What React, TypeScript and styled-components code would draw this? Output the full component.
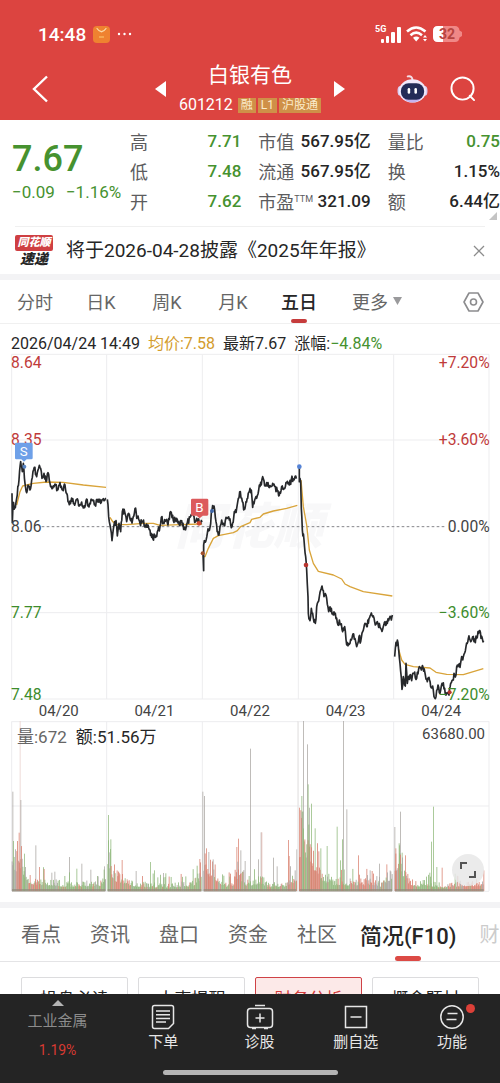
import React from "react";
import styled, { createGlobalStyle } from "styled-components";

const GREEN = "#46922f";
const RED = "#dc4440";

const GlobalStyle = createGlobalStyle`
  * { box-sizing: border-box; }
  body {
    margin: 0;
    background: #fff;
    color: #262626;
    font-family: Roboto, "Noto Sans CJK SC", sans-serif;
  }
  button {
    border: 0;
    padding: 0;
    background: none;
    color: inherit;
    font: inherit;
    white-space: nowrap;
    cursor: pointer;
  }
  svg { display: block; }
`;

const Page = styled.div`
  display: flex;
  flex-direction: column;
  height: 100vh;
`;

const Header = styled.header`
  flex: none;
  background: ${RED};
  color: #fff;
  height: 120px;
`;

const StatusBar = styled.div`
  display: flex;
  align-items: center;
  height: 58px;
  padding: 10px 38px 0;
`;

const Clock = styled.span`
  font-size: 19px;
  font-weight: 500;
  margin-right: 7px;
`;

const StatusIcons = styled.div`
  display: flex;
  align-items: center;
  gap: 5px;
  margin-left: auto;
`;

const TitleBar = styled.div`
  display: grid;
  grid-template-columns: 1fr auto 1fr;
  align-items: center;
  height: 62px;
`;

const HeaderActions = styled.div<{ $end?: boolean }>`
  display: flex;
  align-items: center;
  gap: 22px;
  padding: ${(p) => (p.$end ? "0 24px 0 0" : "0 0 0 32px")};
  justify-content: ${(p) => (p.$end ? "flex-end" : "flex-start")};
`;

const StockSwitch = styled.div`
  display: flex;
  align-items: center;
  gap: 13px;
`;

const StockTitle = styled.div`
  display: flex;
  flex-direction: column;
  align-items: center;
`;

const StockName = styled.h1`
  margin: 0;
  font-size: 21px;
  line-height: 32px;
  font-weight: 400;
`;

const StockMeta = styled.div`
  display: flex;
  align-items: center;
  gap: 2px;
  font-size: 16px;
  line-height: 28px;
`;

const StockCode = styled.span`
  margin-right: 3px;
`;

const Tag = styled.span`
  padding: 0 3px;
  background: #cf9048;
  color: #fbeccb;
  font-size: 12px;
  line-height: 15px;
`;

const Content = styled.main`
  flex: 1;
  min-height: 0;
  overflow-y: auto;
  scrollbar-width: none;
`;

const Quote = styled.section`
  position: relative;
  display: grid;
  grid-template-columns: 118px 1fr;
  height: 106px;
  padding: 6px 0 0 12px;
`;

const LastPrice = styled.div`
  color: ${GREEN};
  white-space: nowrap;
`;

const Price = styled.div`
  padding-top: 14px;
  font-size: 36px;
  line-height: 38px;
  font-weight: 500;
`;

const Change = styled.div`
  display: flex;
  gap: 11px;
  font-size: 17px;
  line-height: 28px;
`;

const StatGroups = styled.div`
  display: grid;
  grid-template-columns: 111fr 112fr 112fr;
  column-gap: 17px;
`;

const Stats = styled.dl`
  margin: 0;
`;

const Stat = styled.div`
  display: flex;
  justify-content: space-between;
  align-items: center;
  height: 30px;
  white-space: nowrap;
`;

const StatLabel = styled.dt`
  color: #5c5c5e;
  font-size: 18px;
  sup {
    font-size: 9px;
    line-height: 0;
  }
`;

const StatValue = styled.dd<{ $down?: boolean }>`
  margin: 0;
  font-size: 17px;
  line-height: 26px;
  font-weight: 500;
  color: ${(p) => (p.$down ? GREEN : "#262626")};
`;

const Corner = styled.svg`
  position: absolute;
  right: 3px;
  bottom: 6px;
`;

const News = styled.section`
  display: flex;
  align-items: center;
  gap: 13px;
  height: 48px;
  margin: 0 15px;
  border-top: 1px solid #f0f0f0;
`;

const NewsBadge = styled.div`
  display: flex;
  flex-direction: column;
  align-items: center;
  width: 38px;
  font-style: italic;
  font-weight: 900;
  font-size: 14px;
  line-height: 16px;
  white-space: nowrap;
`;

const NewsBrand = styled.span`
  align-self: stretch;
  border-radius: 2px;
  background: #cf3f42;
  color: #fff;
  font-size: 11px;
  line-height: 16px;
  text-align: center;
`;

const NewsLink = styled.a`
  flex: 1;
  color: #262626;
  font-size: 19px;
  line-height: 24px;
  text-decoration: none;
  white-space: nowrap;
`;

const Band = styled.div`
  height: 6px;
  background: #f3f3f5;
`;

const PeriodTabs = styled.nav`
  display: grid;
  grid-template-columns: repeat(5, 66fr) 90fr 78fr;
  height: 44px;
  padding-left: 2px;
  border-bottom: 1px solid #f0f0f0;
`;

const PeriodTab = styled.button<{ $active?: boolean }>`
  position: relative;
  display: flex;
  align-items: center;
  justify-content: center;
  gap: 5px;
  padding-bottom: 2px;
  font-size: 18px;
  color: ${(p) => (p.$active ? "#262626" : "#666")};
  font-weight: ${(p) => (p.$active ? 500 : 400)};
  &::after {
    content: "";
    display: ${(p) => (p.$active ? "block" : "none")};
    position: absolute;
    bottom: 0;
    width: 16px;
    height: 4px;
    border-radius: 2px;
    background: #c63c3c;
  }
`;

const SettingsButton = styled.button`
  justify-self: end;
  margin-right: 16px;
`;

const Readout = styled.div`
  display: flex;
  gap: 8px;
  padding: 10px 11px 0;
  font-size: 16px;
  line-height: 20px;
  white-space: nowrap;
`;

const Toned = styled.span<{ $color: string }>`
  color: ${(p) => p.$color};
`;

const Plot = styled.svg`
  width: 100%;
  height: auto;
  overflow: visible;
`;

const Dates = styled.div`
  display: grid;
  grid-template-columns: repeat(5, 1fr);
  padding: 1px 11px 0;
  color: #444;
  font-size: 15px;
  line-height: 20px;
  text-align: center;
`;

const VolumePanel = styled.section`
  position: relative;
  padding-bottom: 9px;
`;

const VolumeLegend = styled.div`
  position: absolute;
  inset: 4px 15px auto 17px;
  display: flex;
  gap: 9px;
  font-size: 17px;
  line-height: 24px;
`;

const VolumeMax = styled.span`
  margin-left: auto;
  color: #444;
  font-size: 15px;
  line-height: 18px;
`;

const ExpandButton = styled.button`
  position: absolute;
  right: 16px;
  bottom: 16px;
  width: 32px;
  height: 32px;
  border-radius: 50%;
  background: rgba(232, 232, 232, 0.85);
  display: grid;
  place-items: center;
`;

const SectionTabs = styled.nav`
  display: flex;
  align-items: stretch;
  gap: 29px;
  height: 54px;
  padding-left: 21px;
  overflow: hidden;
  border-bottom: 1px solid #e4e4e6;
`;

const SectionTab = styled.button<{ $active?: boolean; $faded?: boolean }>`
  position: relative;
  flex: none;
  padding-bottom: 2px;
  font-size: ${(p) => (p.$active ? 22 : 20)}px;
  font-weight: ${(p) => (p.$active ? 500 : 400)};
  color: ${(p) => (p.$active ? "#262626" : p.$faded ? "#ccc" : "#666")};
  margin: ${(p) => (p.$active ? "0 -6px" : "0")};
  &::after {
    content: "";
    display: ${(p) => (p.$active ? "block" : "none")};
    position: absolute;
    left: 50%;
    bottom: 0;
    width: 26px;
    height: 5px;
    margin-left: -13px;
    border-radius: 3px;
    background: #dc4a45;
  }
`;

const Topics = styled.div`
  display: grid;
  grid-template-columns: repeat(4, 1fr);
  gap: 10px;
  padding: 15px 21px;
`;

const Topic = styled.button<{ $active?: boolean }>`
  height: 40px;
  border: 1px solid ${(p) => (p.$active ? "#cf4246" : "#dcdcde")};
  border-radius: 2px;
  background: ${(p) => (p.$active ? "#fce9e8" : "#fff")};
  color: ${(p) => (p.$active ? "#d23b3b" : "#262626")};
  font-size: 17px;
`;

const BottomBar = styled.footer`
  flex: none;
  height: 89px;
  background: #242424;
  color: #e6e6e6;
`;

const BottomNav = styled.nav`
  display: grid;
  grid-template-columns: 115fr repeat(4, 96fr);
  height: 76px;
`;

const BottomItem = styled.button`
  display: flex;
  flex-direction: column;
  align-items: center;
  padding-top: 9px;
  font-size: 15px;
  line-height: 22px;
`;

const SectorItem = styled(BottomItem)`
  gap: 2px;
  padding-top: 6px;
  color: #8c8c8c;
  line-height: 27px;
`;

const SectorChange = styled.span`
  color: #d83a32;
  font-size: 14px;
`;

const IconHolder = styled.span`
  position: relative;
  margin-bottom: 1px;
`;

const Dot = styled.span`
  position: absolute;
  top: 1px;
  right: -9px;
  width: 9px;
  height: 9px;
  border-radius: 50%;
  background: #dc4038;
`;

const HomeIndicator = styled.div`
  width: 35%;
  height: 5px;
  margin: 0 auto;
  border-radius: 3px;
  background: #b4b4b4;
`;

/* ---------- chart data ---------- */

type Pt = [number, number];

const toPts = (s: string): Pt[] => s.split(" ").map((p) => p.split(",").map(Number) as Pt);

const PRICE = [
  "36,190 37,278 39,225 44,232 50,205 57,150 62,95 67,125 70,100 75,160 80,188 84,165 90,180 95,150 103,112 110,140 114,120 120,112 126,145 132,130 138,155 144,128 150,160 158,175 165,162 172,180 180,158 188,180 195,165 200,190 208,224 215,204 222,220 230,208 238,228 245,216 250,234 258,212 265,225 275,208 285,225 295,208 302,220 310,206 318,205",
  "322,208 326,260 330,285 336,332 342,285 348,272 352,318 357,280 362,305 367,245 374,245 380,275 386,250 392,272 398,268 405,236 412,262 420,280 427,275 436,285 444,285 450,300 455,322 466,322 474,300 480,290 484,262 490,280 500,268 504,285 512,245 520,272 530,265 538,285 545,272 553,298 562,278 570,262 580,256 586,276 592,268 600,278 606,276",
  "609,370 611,422 611,345 617,335 622,310 630,292 636,240 642,228 648,275 655,315 660,290 665,270 672,285 680,265 688,270 696,290 703,245 710,235 715,205 721,185 727,215 731,240 738,215 743,205 748,185 754,180 758,232 764,210 770,205 778,165 784,165 788,140 796,168 804,158 812,170 820,165 826,170 836,198 845,170 852,175 860,158 868,165 874,148 882,150 889,146",
  "898,110 898,155 902,155 904,235 907,300 912,330 917,380 920,420 924,500 925,550 930,572 934,535 940,565 946,580 952,520 958,500 966,468 972,500 978,495 986,545 994,535 1000,555 1006,550 1014,585 1018,570 1028,605 1034,590 1040,645 1050,640 1054,630 1061,612 1070,650 1077,620 1082,635 1088,605 1095,580 1100,590 1107,565 1112,555 1120,558 1126,585 1132,575 1140,590 1148,598 1155,575 1162,580 1168,565 1174,570 1177,555",
  "1184,680 1186,655 1192,630 1196,660 1200,700 1206,778 1210,740 1216,768 1218,700 1222,760 1230,735 1235,752 1240,730 1250,745 1258,710 1264,720 1269,712 1276,735 1282,755 1287,742 1292,770 1298,768 1302,800 1308,800 1314,765 1320,790 1326,760 1334,775 1338,795 1347,795 1352,760 1360,750 1362,730 1368,735 1372,705 1380,712 1385,680 1390,680 1398,650 1405,625 1412,635 1418,620 1422,635 1430,625 1438,602 1443,625 1451,632",
].map(toPts);

const AVERAGE = [
  "50,225 60,185 68,168 100,160 140,156 190,157 250,165 318,172",
  "330,262 338,275 350,283 380,284 430,280 460,280 480,286 540,284 606,282",
  "608,380 615,380 625,355 640,325 655,317 700,308 712,302 722,290 750,278 755,268 780,262 790,252 820,243 860,235 892,226",
  "903,150 910,230 920,285 928,360 940,400 955,424 1000,435 1025,447 1035,462 1050,470 1090,485 1177,498",
  "1196,658 1205,690 1215,703 1240,710 1290,714 1308,727 1340,733 1390,734 1420,725 1450,716",
];

const makeRandom = (seed: number) => () => {
  seed = (seed * 16807) % 2147483647;
  return seed / 2147483647;
};

/* Fills the gaps between traded points with small tick movements. */
const withTicks = (pts: Pt[], seed: number) => {
  const rnd = makeRandom(seed);
  const out: string[] = [];
  pts.forEach(([x, y], i) => {
    out.push(`${x},${y}`);
    const next = pts[i + 1];
    if (!next) return;
    const steps = Math.round((next[0] - x) / 2);
    for (let s = 1; s < steps; s++) {
      const nx = x + ((next[0] - x) * s) / steps;
      const ny = y + ((next[1] - y) * s) / steps + (rnd() - 0.5) * 20;
      out.push(`${nx.toFixed(1)},${ny.toFixed(1)}`);
    }
  });
  return out.join(" ");
};

const UP = "#d9806f";
const DOWN = "#8fb87a";
const FLAT = "#a9a5a2";

const ENVELOPE = [
  "36,220 42,110 55,190 62,150 75,90 85,50 120,45 200,30 300,35 316,85",
  "323,200 335,110 345,70 370,55 400,32 450,26 520,26 580,36 604,90",
  "611,150 625,110 640,105 655,50 680,30 700,36 715,110 722,80 740,34 784,55 800,28 850,28 870,45 889,75",
  "898,250 905,250 915,250 930,220 945,140 965,70 990,45 1040,40 1100,40 1140,30 1176,80",
  "1185,150 1195,150 1205,120 1215,60 1240,34 1300,32 1330,24 1400,36 1451,36",
].map(toPts);

const TREND = [
  [[50, FLAT], [66, UP], [84, DOWN], [120, UP], [318, DOWN]],
  [[338, DOWN], [372, UP], [606, DOWN]],
  [[614, FLAT], [662, UP], [690, DOWN], [726, UP], [860, DOWN], [890, UP]],
  [[902, UP], [932, DOWN], [966, UP], [1050, DOWN], [1120, UP], [1177, FLAT]],
  [[1196, UP], [1216, DOWN], [1250, UP], [1340, DOWN], [1452, UP]],
] as [number, string][][];

const SPIKES: [number, number, string][] = [
  [38, 298, FLAT], [40, 150, DOWN], [60, 510, "#e9cfcb"], [62, 273, FLAT], [57, 175, UP], [73, 112, DOWN], [107, 137, FLAT], [118, 72, UP],
  [155, 55, FLAT], [164, 58, FLAT], [208, 102, FLAT], [230, 67, DOWN], [245, 82, FLAT], [272, 64, FLAT], [313, 74, FLAT],
  [325, 228, DOWN], [332, 155, DOWN], [366, 93, UP], [408, 60, FLAT], [451, 87, DOWN], [463, 62, DOWN], [490, 54, FLAT], [599, 96, UP],
  [608, 298, FLAT], [613, 285, FLAT], [619, 128, UP], [626, 117, FLAT], [710, 132, UP], [715, 157, UP], [722, 122, FLAT], [735, 90, FLAT],
  [751, 427, FLAT], [775, 95, FLAT], [783, 176, FLAT], [785, 176, "#e5b5ad"], [820, 100, FLAT], [831, 74, FLAT], [865, 153, UP], [867, 105, UP], [890, 125, FLAT], [893, 510, "#e4e2e2"],
  [898, 250, UP], [905, 285, DOWN], [910, 510, FLAT], [922, 440, FLAT], [924, 320, DOWN], [928, 250, FLAT], [934, 262, DOWN], [945, 188, DOWN],
  [962, 128, DOWN], [981, 135, DOWN], [1011, 193, DOWN], [1021, 92, DOWN], [1027, 155, DOWN], [1030, 510, FLAT], [1040, 245, FLAT], [1075, 107, UP], [1110, 62, FLAT], [1138, 82, FLAT], [1160, 80, UP],
  [1184, 192, FLAT], [1187, 128, UP], [1198, 137, DOWN], [1201, 238, FLAT], [1206, 115, DOWN], [1216, 107, UP], [1294, 148, DOWN], [1300, 253, DOWN], [1310, 72, DOWN], [1326, 70, UP],
];

const levelAt = (pts: Pt[], x: number) => {
  for (let i = 1; i < pts.length; i++) {
    const [x0, y0] = pts[i - 1];
    const [x1, y1] = pts[i];
    if (x <= x1) return y0 + ((y1 - y0) * (x - x0)) / (x1 - x0);
  }
  return pts[pts.length - 1][1];
};

const VOLUME = ENVELOPE.flatMap((pts, day) => {
  const rnd = makeRandom(9173 + day * 577);
  const bars: [number, number, string][] = [];
  for (let x = pts[0][0]; x <= pts[pts.length - 1][0]; x += 2) {
    const max = levelAt(pts, x);
    const r = rnd();
    const main = TREND[day].find(([end]) => x <= end)?.[1] ?? FLAT;
    const pick = rnd();
    const color = pick < 0.6 ? main : pick < 0.75 ? UP : pick < 0.88 ? DOWN : FLAT;
    const burst = rnd() > 0.9 ? 30 : 0;
    bars.push([x, max * (0.4 + 0.6 * r * r) + burst, color]);
  }
  return bars;
});

const GRID_X = [35, 320, 607, 895, 1181, 1467];

/* ---------- charts ---------- */

const AXIS = [
  { y: -185, left: "8.64", right: "+7.20%", color: "#bf3b3b" },
  { y: 46, left: "8.35", right: "+3.60%", color: "#bf3b3b" },
  { y: 306, left: "8.06", right: "0.00%", color: "#444" },
  { y: 564, left: "7.77", right: "−3.60%", color: "#3d8c2c" },
  { y: 809, left: "7.48", right: "−7.20%", color: "#3d8c2c" },
];

function PriceChart() {
  return (
    <Plot viewBox="0 -228 1500 1038" role="img" aria-label="五日走势">
      <text x="747" y="342" fontSize="148" fontWeight="900" fontStyle="italic" fill="#f8f8f9" textAnchor="middle">
        同花顺
      </text>
      <g stroke="#ededef" strokeWidth="3">
        {GRID_X.map((x) => (
          <line key={x} x1={x} x2={x} y1="-227" y2="807" />
        ))}
        {[-227, 30, 548, 807].map((y) => (
          <line key={y} x1="35" x2="1467" y1={y} y2={y} />
        ))}
      </g>
      <line x1="125" x2="1340" y1="290" y2="290" stroke="#85858a" strokeWidth="3" strokeDasharray="8 7" />
      {AVERAGE.map((points) => (
        <polyline key={points} points={points} fill="none" stroke="#d9a43a" strokeWidth="4" strokeLinejoin="round" />
      ))}
      {PRICE.map((pts, i) => (
        <polyline key={i} points={withTicks(pts, 311 + i * 97)} fill="none" stroke="#26282b" strokeWidth="5" strokeLinejoin="round" />
      ))}
      <circle cx="73" cy="110" r="6" fill="#5b86c4" />
      <circle cx="636" cy="243" r="6" fill="#3f66a8" />
      <circle cx="898" cy="110" r="7" fill="#5583d6" />
      <circle cx="608" cy="370" r="6" fill="#a0502c" />
      <circle cx="918" cy="405" r="7" fill="#b8352f" />
      <circle cx="597" cy="280" r="7" fill="#cf4a33" />
      <circle cx="1349" cy="787" r="6" fill="#b8352f" />
      <g fontSize="47">
        {AXIS.map((a) => (
          <g key={a.y} fill={a.color}>
            <text x="33" y={a.y}>
              {a.left}
            </text>
            <text x="1469" y={a.y} textAnchor="end">
              {a.right}
            </text>
          </g>
        ))}
      </g>
      <g fontSize="40" textAnchor="middle" fill="#fff">
        <path d="M49 38h45q4 0 4 4v42q0 4-4 4H80l-8 7-8-7H49q-4 0-4-4V42q0-4 4-4z" fill="#6ea0e8" />
        <text x="71" y="77">
          S
        </text>
        <path d="M577 206h44q4 0 4 4v43q0 4-4 4h-13l-9 8-9-8h-13q-4 0-4-4v-43q0-4 4-4z" fill="#dc5a5c" />
        <text x="598" y="246">
          B
        </text>
      </g>
    </Plot>
  );
}

function VolumeChart() {
  return (
    <Plot viewBox="0 63 1500 516" role="img" aria-label="成交量">
      <g stroke="#ededef" strokeWidth="3">
        {GRID_X.map((x) => (
          <line key={x} x1={x} x2={x} y1="64" y2="573" />
        ))}
        {[65, 318, 574].map((y) => (
          <line key={y} x1="35" x2="1467" y1={y} y2={y} />
        ))}
      </g>
      {SPIKES.map(([x, h, color], i) => (
        <rect key={i} x={x - 1} y={573 - h} width="3" height={h} fill={color} opacity="0.75" />
      ))}
      {VOLUME.map(([x, h, color], i) => (
        <rect key={i} x={x - 1} y={573 - h} width="3" height={h} fill={color} opacity="0.8" />
      ))}
      {ENVELOPE.map((pts, i) => (
        <rect key={i} x={pts[0][0]} y="567" width={pts[pts.length - 1][0] - pts[0][0]} height="8" fill="#938a7c" opacity="0.7" />
      ))}
    </Plot>
  );
}

/* ---------- icons ---------- */

const SignalIcon = () => (
  <svg width="26" height="20" viewBox="0 0 26 20" fill="#fff">
    <text x="0" y="8" fontSize="9" fontWeight="700">
      5G
    </text>
    <rect x="6" y="15" width="3" height="4" rx="1" />
    <rect x="11" y="12" width="3" height="7" rx="1" />
    <rect x="16" y="8" width="4" height="11" rx="1" />
    <rect x="22" y="3" width="4" height="16" rx="1" />
  </svg>
);

const WifiIcon = () => (
  <svg width="22" height="18" viewBox="0 0 22 18" fill="none" stroke="#fff" strokeWidth="2.6">
    <path d="M1 6.500Q10 -1.500 19.500 6.500" />
    <path d="M4.500 10.200Q10.200 5.200 16 10.200" />
    <path d="M7 12.800Q10.200 10 13.500 12.800L10.200 16.400z" fill="#fff" stroke="none" />
    <path d="M17 12.500l2-2.500 2 2.500zM17 14l2 2.500 2-2.500z" fill="#fff" stroke="none" />
  </svg>
);

const BatteryIcon = () => (
  <svg width="29" height="16" viewBox="0 0 29 16">
    <path d="M5 0H22q4 0 4.500 4.500L29 6v4l-2.500 1.500Q26 16 22 16H5q-5 0-5-5V5q0-5 5-5z" fill="#f08886" />
    <path d="M5 0h5v16H5q-5 0-5-5V5q0-5 5-5z" fill="#fff" />
    <text x="14" y="13" fontSize="14" fontWeight="700" fill="#b8443f" textAnchor="middle">
      32
    </text>
  </svg>
);

const ShopIcon = () => (
  <svg width="17" height="17" viewBox="0 0 17 17">
    <rect width="17" height="17" rx="4" fill="#ef8230" />
    <path d="M4 2.500q4.500 6.500 9 0" fill="none" stroke="#fbd9a8" strokeWidth="1.300" strokeLinecap="round" />
    <path d="M6 11h5" stroke="#f8b35c" strokeWidth="1.500" />
  </svg>
);

const DotsSvg = styled.svg`
  margin-left: 7px;
`;

const MoreDots = () => (
  <DotsSvg width="16" height="4" viewBox="0 0 16 4" fill="#fff">
    <circle cx="2" cy="2" r="1.200" />
    <circle cx="7.500" cy="2" r="1.200" />
    <circle cx="13" cy="2" r="1.200" />
  </DotsSvg>
);

const RobotIcon = () => (
  <svg width="31" height="30" viewBox="0 0 32 30">
    <path d="M11 2q5-1 5 4" fill="none" stroke="#f4dfe8" strokeWidth="2" strokeLinecap="round" />
    <ellipse cx="3.500" cy="17" rx="3" ry="5" fill="#d9cdf2" />
    <ellipse cx="28.500" cy="17" rx="3" ry="5" fill="#d9cdf2" />
    <ellipse cx="16" cy="17" rx="14" ry="12" fill="#f1e9fb" />
    <path d="M5 22q4 7 11 7t11-7q-5 4-11 4T5 22z" fill="#c5b2ee" />
    <rect x="4" y="9" width="24" height="17" rx="8" fill="#232b57" />
    <rect x="11" y="14" width="2.600" height="6" rx="1.300" fill="#fff" />
    <rect x="18" y="14" width="2.600" height="6" rx="1.300" fill="#fff" />
  </svg>
);

const SearchIcon = () => (
  <svg width="26" height="26" viewBox="0 0 27 27" fill="none" stroke="#fff" strokeWidth="2" strokeLinecap="round">
    <circle cx="13" cy="13" r="11.500" />
    <path d="M20.500 20.500l4.500 4.500" />
  </svg>
);

const HexIcon = () => (
  <svg width="21" height="20" viewBox="0 0 21 20" fill="none" stroke="#8c8c8e" strokeWidth="1.600" strokeLinejoin="round">
    <path d="M6 1h9l5 9-5 9H6l-5-9z" />
    <circle cx="10.500" cy="10" r="3" />
  </svg>
);

const iconProps = { width: 28, height: 27, viewBox: "0 0 28 27", fill: "none", stroke: "#e6e6e6", strokeWidth: 1.5 } as const;

const OrderIcon = () => (
  <svg {...iconProps}>
    <path d="M5.500 2.500h17q2 0 2 2v16l-5 5h-14q-2 0-2-2v-19q0-2 2-2zM7 8h14M7 11.700h14M7 15.400h14M7 19h10" />
  </svg>
);

const DiagnoseIcon = () => (
  <svg {...iconProps}>
    <rect x="1.500" y="5.500" width="25" height="19" rx="3" />
    <path d="M14 10.500v9M9.500 15h9M9 2.500h10M6 25.500h4M18 25.500h4" />
  </svg>
);

const RemoveIcon = () => (
  <svg {...iconProps}>
    <path d="M3.500 3.500h21v21h-21zM8.500 14h11" />
  </svg>
);

const FunctionIcon = () => (
  <svg {...iconProps}>
    <circle cx="14" cy="14" r="11.200" />
    <path d="M9.500 10.500h10M8.500 16.500h10" />
  </svg>
);

const Triangle = ({ w, h, d, fill }: { w: number; h: number; d: string; fill: string }) => (
  <svg width={w} height={h} viewBox={`0 0 ${w} ${h}`} fill={fill}>
    <path d={d} />
  </svg>
);

/* ---------- page ---------- */

type Row = { label: React.ReactNode; value: string; down?: boolean };

const STATS: Row[][] = [
  [
    { label: "高", value: "7.71", down: true },
    { label: "低", value: "7.48", down: true },
    { label: "开", value: "7.62", down: true },
  ],
  [
    { label: "市值", value: "567.95亿" },
    { label: "流通", value: "567.95亿" },
    { label: <>市盈<sup>TTM</sup></>, value: "321.09" },
  ],
  [
    { label: "量比", value: "0.75", down: true },
    { label: "换", value: "1.15%" },
    { label: "额", value: "6.44亿" },
  ],
];

export default function App() {
  return (
    <Page>
      <GlobalStyle />
      <Header>
        <StatusBar>
          <Clock>14:48</Clock>
          <ShopIcon />
          <MoreDots />
          <StatusIcons>
            <SignalIcon />
            <WifiIcon />
            <BatteryIcon />
          </StatusIcons>
        </StatusBar>
        <TitleBar>
          <HeaderActions>
            <button aria-label="返回">
              <svg width="17" height="28" viewBox="0 0 17 28" fill="none" stroke="#fff" strokeWidth="2.400">
                <path d="M15 1.500L2 14l13 12.500" />
              </svg>
            </button>
          </HeaderActions>
          <StockSwitch>
            <button aria-label="上一只">
              <Triangle w={11} h={16} d="M11 0v16L0 8z" fill="#fff" />
            </button>
            <StockTitle>
              <StockName>白银有色</StockName>
              <StockMeta>
                <StockCode>601212</StockCode>
                <Tag>融</Tag>
                <Tag>L1</Tag>
                <Tag>沪股通</Tag>
              </StockMeta>
            </StockTitle>
            <button aria-label="下一只">
              <Triangle w={11} h={16} d="M0 0v16l11-8z" fill="#fff" />
            </button>
          </StockSwitch>
          <HeaderActions $end>
            <button aria-label="智能助手">
              <RobotIcon />
            </button>
            <button aria-label="搜索">
              <SearchIcon />
            </button>
          </HeaderActions>
        </TitleBar>
      </Header>

      <Content>
        <Quote>
          <LastPrice>
            <Price>7.67</Price>
            <Change>
              <span>−0.09</span>
              <span>−1.16%</span>
            </Change>
          </LastPrice>
          <StatGroups>
            {STATS.map((rows, i) => (
              <Stats key={i}>
                {rows.map((row, j) => (
                  <Stat key={j}>
                    <StatLabel>{row.label}</StatLabel>
                    <StatValue $down={row.down}>{row.value}</StatValue>
                  </Stat>
                ))}
              </Stats>
            ))}
          </StatGroups>
          <Corner width="8" height="8" viewBox="0 0 8 8" fill="#c4c4c4">
            <path d="M8 0v8H0z" />
          </Corner>
        </Quote>

        <News>
          <NewsBadge>
            <NewsBrand>同花顺</NewsBrand>
            速递
          </NewsBadge>
          <NewsLink href="#news">将于2026-04-28披露《2025年年报》</NewsLink>
          <button aria-label="关闭">
            <svg width="12" height="12" viewBox="0 0 12 12" stroke="#8c8c8c" strokeWidth="1.300">
              <path d="M1 1l10 10M11 1L1 11" />
            </svg>
          </button>
        </News>
        <Band />

        <PeriodTabs>
          {["分时", "日K", "周K", "月K", "五日"].map((label) => (
            <PeriodTab key={label} $active={label === "五日"}>
              {label}
            </PeriodTab>
          ))}
          <PeriodTab>
            更多
            <Triangle w={9} h={8} d="M0 0h9L4.500 8z" fill="#9a9a9c" />
          </PeriodTab>
          <SettingsButton aria-label="设置">
            <HexIcon />
          </SettingsButton>
        </PeriodTabs>

        <Readout>
          <span>2026/04/24 14:49</span>
          <Toned $color="#d39c2c">均价:7.58</Toned>
          <span>最新7.67</span>
          <span>
            涨幅:<Toned $color={GREEN}>−4.84%</Toned>
          </span>
        </Readout>
        <PriceChart />
        <Dates>
          {["04/20", "04/21", "04/22", "04/23", "04/24"].map((d) => (
            <span key={d}>{d}</span>
          ))}
        </Dates>
        <VolumePanel>
          <VolumeChart />
          <VolumeLegend>
            <Toned $color="#666">量:672</Toned>
            <span>额:51.56万</span>
            <VolumeMax>63680.00</VolumeMax>
          </VolumeLegend>
          <ExpandButton aria-label="全屏">
            <svg width="18" height="18" viewBox="0 0 18 18" fill="none" stroke="#555" strokeWidth="2">
              <path d="M2 8V2h6M16 10v6h-6" />
            </svg>
          </ExpandButton>
        </VolumePanel>
        <Band />

        <SectionTabs>
          {["看点", "资讯", "盘口", "资金", "社区"].map((label) => (
            <SectionTab key={label}>{label}</SectionTab>
          ))}
          <SectionTab $active>简况(F10)</SectionTab>
          <SectionTab $faded>财务</SectionTab>
        </SectionTabs>
        <Topics>
          {["操盘必读", "大事提醒", "财务分析", "概念题材"].map((label) => (
            <Topic key={label} $active={label === "财务分析"}>
              {label}
            </Topic>
          ))}
        </Topics>
      </Content>

      <BottomBar>
        <BottomNav>
          <SectorItem>
            <Triangle w={12} h={6} d="M6 0l6 6H0z" fill="#b4b4b4" />
            <span>工业金属</span>
            <SectorChange>1.19%</SectorChange>
          </SectorItem>
          <BottomItem>
            <IconHolder><OrderIcon /></IconHolder>
            下单
          </BottomItem>
          <BottomItem>
            <IconHolder><DiagnoseIcon /></IconHolder>
            诊股
          </BottomItem>
          <BottomItem>
            <IconHolder><RemoveIcon /></IconHolder>
            删自选
          </BottomItem>
          <BottomItem>
            <IconHolder>
              <FunctionIcon />
              <Dot />
            </IconHolder>
            功能
          </BottomItem>
        </BottomNav>
        <HomeIndicator />
      </BottomBar>
    </Page>
  );
}
